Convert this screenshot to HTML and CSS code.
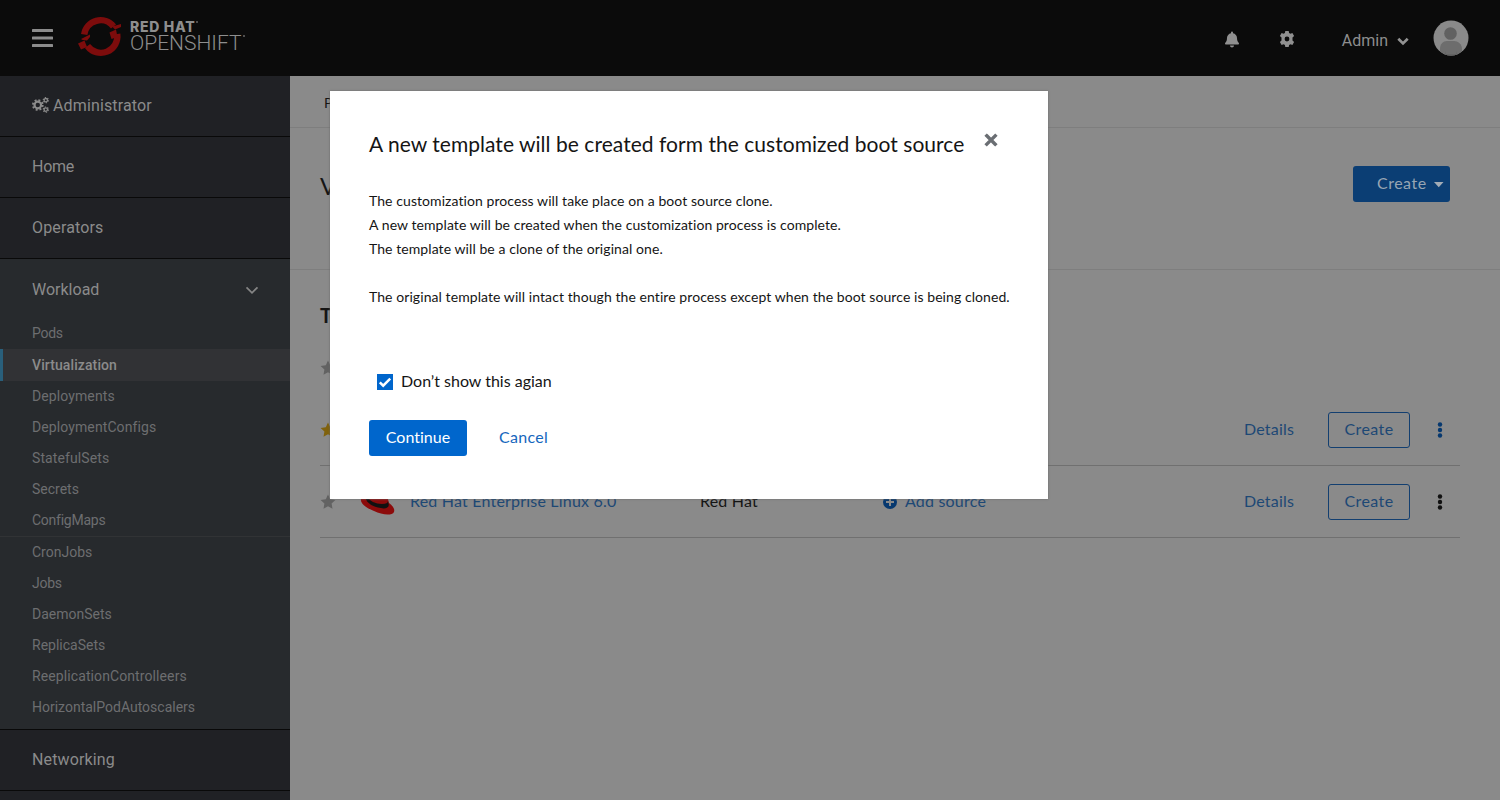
FILE: index.html
```html
<!DOCTYPE html>
<html lang="en">
<head>
<meta charset="utf-8">
<title>Red Hat OpenShift</title>
<link rel="stylesheet" href="styles.css">
</head>
<body>
<header class="masthead">
  <svg class="burger" width="21" height="20" viewBox="0 0 21 20"><g fill="#8c8c8c"><rect y="1" width="21" height="3" rx=".6"/><rect y="8.500" width="21" height="3" rx=".6"/><rect y="16" width="21" height="3" rx=".6"/></g></svg>
  <svg class="ring" width="46" height="42" viewBox="0 0 46 42">
    <g fill="none" stroke="#7d0c0c" stroke-width="6.400"><path d="M6.200 18.500A16.500 16.500 0 0 1 35.500 10.500"/><path d="M39.200 18A16.500 16.500 0 0 1 9.500 30"/></g>
    <g fill="#7d0c0c"><path d="M31.500 16.500 38 13.500l1.500 7.500-6 2z"/><path d="M34 10.500 43 8v3l-6 2.500z"/><path d="M0 27.500 6.500 24.500l2.500 6.500-6 2.500z"/><path d="M3 23 12 18.500v2.500L9 24.500 4.500 24z"/></g>
  </svg>
  <div class="brand"><span class="brand-top">RED HAT<i class="mark"></i></span><span class="brand-bottom">OPENSHIFT<i class="mark"></i></span></div>
  <svg class="bell" width="14" height="17" viewBox="0 0 448 512"><path fill="#909090" d="M224 512c35 0 64-29 64-64H160c0 35 29 64 64 64zm215-150c-19-21-55-52-55-154 0-78-55-140-128-155V32a32 32 0 1 0-64 0v21C119 68 64 130 64 208c0 102-36 133-55 154-6 6-9 14-9 22 0 16 13 32 32 32h384c19 0 32-16 32-32 0-8-3-16-9-22z"/></svg>
  <svg class="cog" width="16" height="16" viewBox="0 0 16 16"><path fill="#909090" fill-rule="evenodd" d="M6.300 0h3.400l.4 2 1.300.8 2-.7 1.700 2.900-1.600 1.400v3.100l1.600 1.400-1.700 3-2-.7-1.300.8-.4 2H6.300l-.4-2-1.300-.8-2 .7-1.700-3 1.600-1.400V6.400L.9 5l1.700-2.900 2 .7L5.900 2zM8 5.600a2.400 2.400 0 1 0 0 4.800 2.400 2.400 0 0 0 0-4.800z"/></svg>
  <span class="user">Admin</span>
  <svg class="user-caret" width="12" height="9" viewBox="0 0 12 9"><path d="M1.300 1.700 6 6.400l4.700-4.700" fill="none" stroke="#929292" stroke-width="2.700"/></svg>
  <svg class="avatar" width="36" height="36" viewBox="0 0 36 36"><clipPath id="disc"><circle cx="18" cy="18" r="17.500"/></clipPath><g clip-path="url(#disc)"><path fill="#8a8a8a" d="M0 0h36v36H0z"/><circle cx="17.500" cy="13.500" r="6.300" fill="#616161"/><path d="M7 36v-7c0-5 3-8 7-8h7c4 0 8 3 8 8v7z" fill="#6d6d6d"/><path d="M12 31v5h12v-5l-1 3H13z" fill="#636363"/></g></svg>
</header>
<div class="shell">
  <nav class="sidebar">
    <div class="nav-item"><svg class="cogs" width="17" height="16" viewBox="0 0 17 16"><g fill="none" stroke="#8b8b8b"><circle cx="5.800" cy="8" r="3.300" stroke-width="2.200"/><circle cx="5.800" cy="8" r="4.900" stroke-width="1.900" stroke-dasharray="1.950 1.900"/><circle cx="13.800" cy="3.200" r="1.700" stroke-width="1.300"/><circle cx="13.800" cy="3.200" r="2.600" stroke-width="1.100" stroke-dasharray="1.350 1.370"/><circle cx="13.800" cy="12.600" r="1.700" stroke-width="1.300"/><circle cx="13.800" cy="12.600" r="2.600" stroke-width="1.100" stroke-dasharray="1.350 1.370"/></g></svg><span>Administrator</span></div>
    <div class="nav-item tight">Home</div>
    <div class="nav-item">Operators</div>
    <div class="nav-group">
      <div class="nav-head"><span>Workload</span><svg width="14" height="9" viewBox="0 0 14 9"><path d="m1.500 1.300 5.500 5.500 5.500-5.500" fill="none" stroke="#858585" stroke-width="1.700"/></svg></div>
      <div class="sub tight">Pods</div>
      <div class="sub current">Virtualization</div>
      <div class="sub">Deployments</div>
      <div class="sub">DeploymentConfigs</div>
      <div class="sub">StatefulSets</div>
      <div class="sub even">Secrets</div>
      <div class="sub tight">ConfigMaps</div>
      <div class="sub split even">CronJobs</div>
      <div class="sub tight">Jobs</div>
      <div class="sub even">DaemonSets</div>
      <div class="sub even">ReplicaSets</div>
      <div class="sub">ReeplicationControlleers</div>
      <div class="sub even">HorizontalPodAutoscalers</div>
    </div>
    <div class="nav-item">Networking</div>
    <div class="nav-item"></div>
  </nav>
  <main class="content">
    <div class="crumb">Project</div>
    <div class="titlebar"><h1>Virtualization</h1><button class="create"><span>Create</span><svg width="10" height="6" viewBox="0 0 10 6"><path d="M0 0h9.500L4.750 5.200z" fill="#a3acb6"/></svg></button></div>
    <section class="list">
      <h2>Templates</h2>
      <div class="row filter"><svg class="star" width="16" height="16" viewBox="0 0 16 16"><path fill="#626262" d="m8 .5 2.200 4.700 5.200.7-3.800 3.600.9 5.200L8 12.200l-4.500 2.500.9-5.200L.6 5.900l5.200-.7z"/></svg></div>
      <div class="row"><svg class="star" width="16" height="16" viewBox="0 0 16 16"><path fill="#80620d" d="m8 .5 2.200 4.700 5.200.7-3.800 3.600.9 5.200L8 12.200l-4.500 2.500.9-5.200L.6 5.900l5.200-.7z"/></svg>
        <span class="fill"></span><a class="details">Details</a><button class="outline"><span>Create</span></button><svg class="kebab blue" width="6" height="16" viewBox="0 0 6 16"><circle cx="3" cy="2.500" r="2.200"/><circle cx="3" cy="8" r="2.200"/><circle cx="3" cy="13.500" r="2.200"/></svg></div>
      <div class="row"><svg class="star" width="16" height="16" viewBox="0 0 16 16"><path fill="#626262" d="m8 .5 2.200 4.700 5.200.7-3.800 3.600.9 5.200L8 12.200l-4.500 2.500.9-5.200L.6 5.900l5.200-.7z"/></svg>
        <svg class="hat" width="36" height="28" viewBox="0 0 36 28"><path fill="#8c0b0b" d="M7 9C9 2 12 0 15 2c3 2 6 0 9 2 3 1 4 7 5 11 4 3 6 6 5 9-2 4-12 3-20-1C6 20 0 15 1 11c1-2 3-2 6-2z"/><path fill="#111" d="M7 8c2 5 9 8 15 8 4 0 6-1 6-3l.8 4c0 3-4 4-8 3C13 19 7 15 6 11z"/></svg>
        <a class="name">Red Hat Enterprise Linux 6.0</a><span class="vendor">Red Hat</span><span class="source"><svg width="14" height="14" viewBox="0 0 14 14"><circle cx="7" cy="7" r="7" fill="#06386f"/><path d="M7 3v8M3 7h8" stroke="#8a8a8a" stroke-width="2"/></svg><a>Add source</a></span>
        <span class="fill"></span><a class="details">Details</a><button class="outline"><span>Create</span></button><svg class="kebab" width="6" height="16" viewBox="0 0 6 16"><circle cx="3" cy="2.500" r="2.200"/><circle cx="3" cy="8" r="2.200"/><circle cx="3" cy="13.500" r="2.200"/></svg></div>
    </section>
  </main>
</div>
<div class="modal" role="dialog">
  <div class="modal-head"><h3>A new template will be created form the customized boot source</h3><svg width="14" height="14" viewBox="0 0 14 14"><path d="m2.800 2.800 8.400 8.400m0-8.400-8.400 8.400" stroke="#6a6e73" stroke-width="3.400" stroke-linecap="square" fill="none"/></svg></div>
  <div class="copy"><p>The customization process will take place on a boot source clone.</p><p>A new template will be created when the customization process is complete.</p><p>The template will be a clone of the original one.</p><p class="gap">The original template will intact though the entire process except when the boot source is being cloned.</p></div>
  <label class="check"><svg width="16" height="16" viewBox="0 0 16 16"><path fill="#06c" d="M0 0h16v16H0z"/><path d="m2.800 8.300 3.400 3.400 7-7" stroke="#fff" stroke-width="2.500" fill="none"/></svg><span>Don’t show this agian</span></label>
  <div class="actions"><button class="primary"><span>Continue</span></button><a>Cancel</a></div>
</div>
</body>
</html>
```
FILE: styles.css
```css
* { box-sizing: border-box; }
body { margin: 0; width: 1500px; height: 800px; overflow: hidden; position: relative; background: #8a8a8a; font-family: Lato, sans-serif; font-size: 16px; color: #151515; font-variant-ligatures: none; }
h1, h2, h3, p { margin: 0; font-weight: 400; }
svg { display: block; flex: none; }
button { border: 0; padding: 0; font: inherit; }
.masthead { height: 76px; background: #0b0b0b; display: flex; align-items: center; padding: 0 31px 0 32px; color: #8e8e8e; }
.ring { margin: -2px 0 0 25px; }
.brand { display: flex; flex-direction: column; margin: -3px 0 0 6px; line-height: 1; font-family: Roboto, sans-serif; }
.brand-top { font-family: Inter, sans-serif; font-size: 14px; font-weight: 800; letter-spacing: .7px; }
.brand-bottom { font-size: 21px; font-weight: 300; margin-top: -1px; }
.mark { display: inline-block; width: 2px; height: 2px; border-radius: 50%; background: #666; margin-left: 1px; vertical-align: 9px; }
.brand-bottom .mark { vertical-align: 13px; }
.bell { margin: 2px 0 0 auto; }
.cog { margin: 2px 0 0 40px; }
.user { margin-left: 47px; padding-top: 5px; font-family: Roboto, sans-serif; }
.user-caret { margin: 7px 0 0 9px; }
.avatar { margin-left: 24px; }
.shell { display: flex; height: 724px; }
.sidebar { width: 290px; flex: none; background: #202125; font-family: Roboto, sans-serif; color: #8b8b8b; overflow: hidden; }
.nav-item { height: 61px; border-bottom: 1px solid #090909; padding: 0 32px 2px; display: flex; align-items: center; letter-spacing: .14px; }
.cogs { margin-right: 4px; }
.nav-group { background: #272a2d; height: 471px; border-bottom: 1px solid #090909; }
.nav-head { height: 59px; padding: 3px 31px 0 32px; display: flex; align-items: center; justify-content: space-between; }
.nav-head span { padding-bottom: 2px; }
.sub { height: 31px; padding: 0 0 2px 32px; display: flex; align-items: center; font-size: 14px; color: #6d6e70; letter-spacing: .1px; }
.nav-item.tight, .sub.tight { letter-spacing: -.25px; }
.sub.even { letter-spacing: 0; }
.sub.current { height: 32px; background: #313235; border-left: 3px solid #295f7b; padding: 0 0 0 29px; color: #8b8b8b; font-weight: 500; }
.split { height: 32px; border-top: 1px solid #313335; }
.content { flex: 1; background: #8a8a8a; }
.crumb { height: 52px; border-bottom: 1px solid #7e7e7e; padding: 18px 34px; font-size: 14px; }
.titlebar { height: 142px; border-bottom: 1px solid #7e7e7e; padding: 38px 50px 0 30px; display: flex; justify-content: space-between; }
h1 { font-size: 24px; line-height: 39px; }
.create { width: 97px; height: 36px; background: #0b3e74; border-radius: 3px; color: #98a5b3; display: flex; align-items: center; padding-left: 24px; gap: 7px; letter-spacing: .5px; }
.create svg { margin-top: 2px; }
.create span, .outline span, .primary span { display: inline-block; padding-bottom: 3px; }
.list { padding: 31px 40px 0 30px; }
h2 { font-size: 20px; line-height: 28px; font-weight: 700; height: 30px; }
.row { height: 72px; display: flex; align-items: center; border-bottom: 1px solid #707070; letter-spacing: .2px; }
.row.filter { border: 0; height: 63px; padding-top: 11px; }
.hat { margin-left: 24px; }
.name { margin-left: 14px; width: 290px; }
.vendor { width: 183px; }
.source { display: flex; align-items: center; gap: 8px; }
.name, .vendor, .source a, .details { padding-bottom: 2px; }
.fill { flex: 1; }
.row a { color: #1d4875; }
.details { width: 84px; }
.outline { width: 82px; height: 36px; border: 1px solid #133f70; border-radius: 3px; background: none; color: #1d4875; letter-spacing: .4px; }
.kebab { margin: 0 17px 0 27px; fill: #111; }
.blue { fill: #06386f; }
.modal { position: absolute; left: 330px; top: 91px; width: 718px; height: 408px; background: #fff; padding: 37px 20px 0 39px; box-shadow: 0 0 2px #666; }
.modal-head { display: flex; }
.modal h3 { font-size: 21px; line-height: 31px; height: 32px; width: 615px; white-space: nowrap; letter-spacing: .04px; }
.modal-head svg { margin-top: 5px; }
.copy { margin-top: 29px; font-size: 14px; line-height: 24px; white-space: nowrap; height: 120px; margin-bottom: 60px; letter-spacing: .075px; }
.gap { margin-top: 24px; }
.check { display: flex; align-items: center; height: 24px; gap: 8px; padding: 1px 0 0 8px; }
.check span { padding-bottom: 2px; }
.actions { margin-top: 27px; display: flex; align-items: center; gap: 32px; color: #1667bd; letter-spacing: .1px; }
.actions a { padding-bottom: 3px; letter-spacing: .3px; }
.primary { width: 98px; height: 36px; border-radius: 3px; background: #06c; color: #fff; }
```
